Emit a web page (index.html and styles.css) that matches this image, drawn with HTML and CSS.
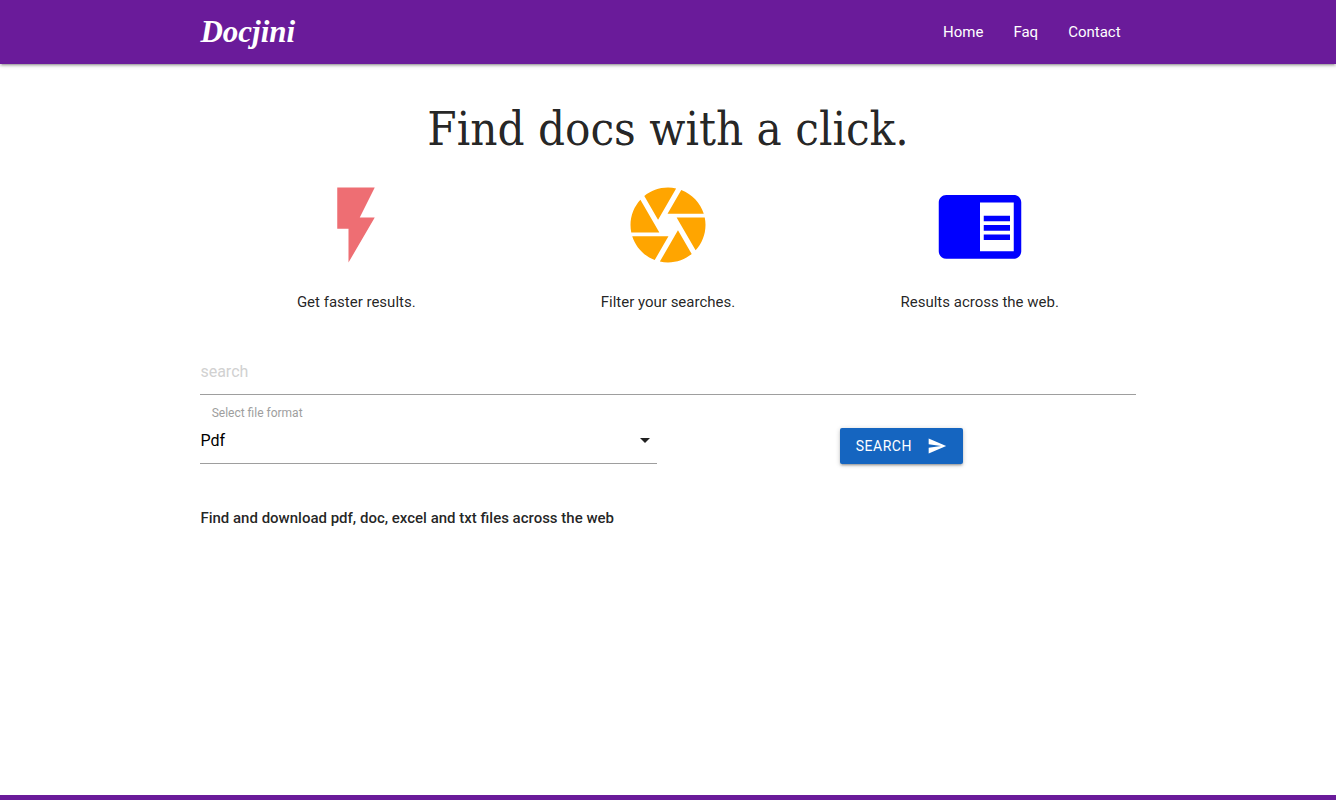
FILE: index.html
```html
<!DOCTYPE html>
<html lang="en">
<head>
<meta charset="utf-8">
<title>Docjini</title>
<link rel="stylesheet" href="styles.css">
</head>
<body>
<header class="navbar">
  <div class="container navbar-inner">
    <a class="brand">Docjini</a>
    <nav class="nav-links"><a>Home</a><a>Faq</a><a>Contact</a></nav>
  </div>
</header>
<main class="container">
  <h1 class="title"><span class="title-text">Find docs with a click.</span></h1>
  <section class="features">
    <div class="feature">
      <svg class="feature-icon flash" viewBox="0 0 24 24"><path d="M7 2v11h3v9l7-12h-4l4-8z"/></svg>
      <p>Get faster results.</p>
    </div>
    <div class="feature">
      <svg class="feature-icon camera" viewBox="0 0 24 24"><path d="M9.4 10.5l4.77-8.26C13.47 2.09 12.75 2 12 2c-2.4 0-4.6.85-6.32 2.25l3.66 6.35.06-.1zM21.54 9c-.92-2.92-3.15-5.26-6-6.34L11.88 9h9.66zm.26 1h-7.49l.29.5 4.76 8.25C21 16.97 22 14.61 22 12c0-.69-.07-1.35-.2-2zM8.54 12l-3.9-6.75C3.01 7.03 2 9.39 2 12c0 .69.07 1.35.2 2h7.49l-1.15-2zm-6.08 3c.92 2.92 3.15 5.26 6 6.34L12.12 15H2.46zm11.27 0l-3.9 6.76c.7.15 1.42.24 2.17.24 2.4 0 4.6-.85 6.32-2.25l-3.66-6.35-.93 1.6z"/></svg>
      <p>Filter your searches.</p>
    </div>
    <div class="feature">
      <svg class="feature-icon reader" viewBox="0 0 24 24"><path d="M13 12h7v1.5h-7zm0-2.5h7V11h-7zm0 5h7V16h-7zM21 4H3c-1.1 0-2 .9-2 2v13c0 1.1.9 2 2 2h18c1.1 0 2-.9 2-2V6c0-1.1-.9-2-2-2zm0 15h-9V6h9v13z"/></svg>
      <p>Results across the web.</p>
    </div>
  </section>
  <form class="search-form">
    <input class="search-input" type="text" placeholder="search">
    <div class="form-row">
      <div class="format">
        <label class="format-label">Select file format</label>
        <div class="format-select"><span>Pdf</span>
          <svg class="caret" viewBox="0 0 24 24"><path d="M7 10l5 5 5-5z"/></svg>
        </div>
      </div>
      <button class="search-btn" type="button">SEARCH
        <svg class="send" viewBox="0 0 24 24"><path d="M2.01 21L23 12 2.01 3 2 10l15 2-15 2z"/></svg>
      </button>
    </div>
  </form>
  <p class="tagline">Find and download pdf, doc, excel and txt files across the web</p>
</main>
<footer class="footer"></footer>
</body>
</html>
```
FILE: styles.css
```css
* { box-sizing: border-box; }
body {
  margin: 0;
  height: 800px;
  display: flex;
  flex-direction: column;
  overflow: hidden;
  background: #fff;
  color: rgba(0, 0, 0, .87);
  font: 15px/22.5px Roboto, sans-serif;
}
p { margin: 0; }
.container { width: 70%; margin: 0 auto; }
.navbar {
  height: 64px;
  flex: none;
  background: #6a1b9a;
  color: #fff;
  box-shadow: 0 2px 2px 0 rgba(0,0,0,.14), 0 3px 1px -2px rgba(0,0,0,.12), 0 1px 5px 0 rgba(0,0,0,.2);
}
.navbar-inner { display: flex; justify-content: space-between; line-height: 64px; }
.brand { font: italic 700 31px/64px "Liberation Serif", serif; }
.nav-links { display: flex; }
.nav-links a { padding: 0 15px; }
.title {
  margin: 34px 0 0;
  font: 400 47px/62px "DejaVu Serif Condensed", "DejaVu Serif", serif;
  text-align: center;
  white-space: nowrap;
}
.title-text { display: inline-block; }
.features { display: grid; grid-template-columns: repeat(3, 1fr); margin-top: 20px; }
.feature { display: flex; flex-direction: column; align-items: center; }
.feature-icon { width: 90px; height: 90px; margin-bottom: 21px; }
.flash { fill: #ee6e73; }
.camera { fill: orange; }
.reader { fill: blue; }
.search-form { margin-top: 35px; }
.search-input {
  display: block;
  width: 100%;
  height: 46px;
  padding: 0;
  border: 0;
  border-bottom: 1px solid #9e9e9e;
  outline: none;
  background: transparent;
  font: 16px Roboto, sans-serif;
}
.search-input::placeholder { color: #d1d1d1; }
.form-row { display: flex; align-items: flex-start; }
.format { width: 456.4px; padding-top: 9px; }
.format-label { display: block; padding-left: 11.25px; color: #9e9e9e; font-size: 12px; line-height: 18px; }
.format-select {
  display: flex;
  align-items: center;
  justify-content: space-between;
  height: 42px;
  border-bottom: 1px solid #9e9e9e;
  color: #000;
  font-size: 16px;
  line-height: 37px;
}
.format-select span { padding-bottom: 4px; }
.caret { width: 24px; height: 24px; margin-bottom: 4px; fill: rgba(0,0,0,.87); }
.search-btn {
  display: flex;
  align-items: center;
  justify-content: space-between;
  width: 123px;
  height: 36px;
  margin: 33px 0 0 183px;
  padding: 0 16px;
  border: 0;
  border-radius: 2px;
  background: #1565c0;
  color: #fff;
  font: 14px Roboto, sans-serif;
  letter-spacing: .5px;
  box-shadow: 0 2px 2px 0 rgba(0,0,0,.14), 0 3px 1px -2px rgba(0,0,0,.12), 0 1px 5px 0 rgba(0,0,0,.2);
}
.send { width: 20px; height: 20px; fill: #fff; }
.tagline { margin-top: 43px; font-weight: 500; }
.footer { flex: none; height: 5px; margin-top: auto; background: #6a1b9a; }
```
